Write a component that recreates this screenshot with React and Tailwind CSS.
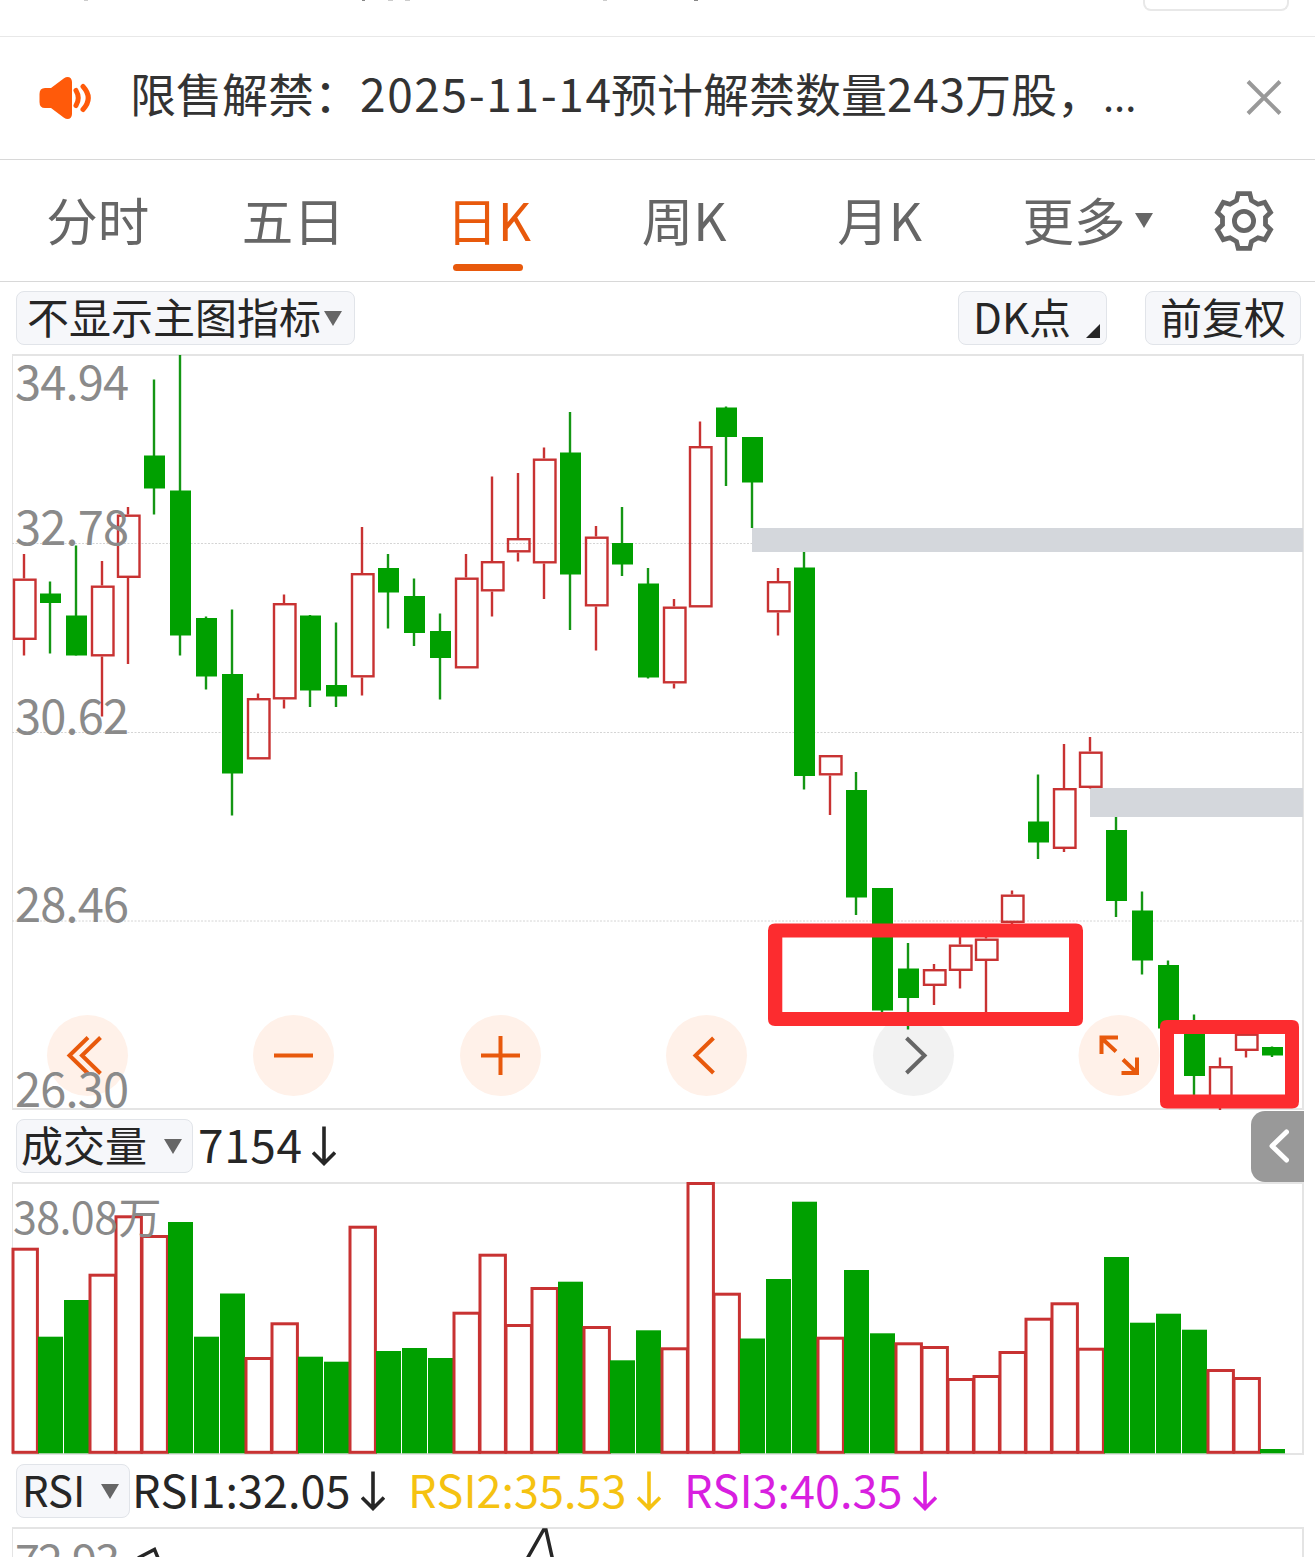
import React from "react";

const FONT = "font-['Noto_Sans_CJK_SC',sans-serif]";
const UP = "#c83232";
const DOWN = "#00a000";

// [direction, high, bodyTop, bodyBottom, low] in chart pixels
const CANDLES = [
  ["u", 554, 578.5, 640, 655.5], ["d", 581.5, 593.5, 603, 653.5], ["d", 545.5, 615.5, 655.5, 655.5],
  ["u", 561, 585.5, 656.5, 716.5], ["u", 507, 514.5, 578, 664], ["d", 379.5, 455.5, 488.5, 514.5],
  ["d", 355, 490.5, 635.5, 655.5], ["d", 616.5, 618, 676.5, 689.5], ["d", 609.5, 674, 773.5, 815.5],
  ["u", 693.5, 698, 759.5, 759.5], ["u", 594.5, 603, 699.5, 708.5], ["d", 615, 615.5, 690.5, 707],
  ["d", 622.5, 685, 696.5, 707], ["u", 527, 573, 677.5, 695.5], ["d", 554, 568, 592.5, 628.5],
  ["d", 578.5, 596, 633, 646], ["d", 613.5, 631, 658, 699.5], ["u", 554, 577.5, 668.5, 668.5],
  ["u", 476.5, 561, 591.5, 616.5], ["u", 473, 538, 552.5, 561.5], ["u", 447.5, 458.5, 563.5, 599],
  ["d", 412, 452.5, 574.5, 630], ["u", 526, 536.5, 606.5, 650.5], ["d", 507, 543, 564.5, 576],
  ["d", 568, 583.5, 677.5, 678.5], ["u", 599, 606.5, 683.5, 688.5], ["u", 421.5, 446, 607.5, 607.5],
  ["d", 406.5, 407.5, 437, 486], ["d", 437, 437, 482.5, 528], ["u", 568, 581, 612.5, 635.5],
  ["d", 552, 567.5, 776, 789.5], ["u", 755, 755, 775.5, 815], ["d", 772, 790, 897.5, 915],
  ["d", 888, 888, 1010.5, 1014], ["d", 943, 968.5, 998, 1029.5], ["u", 964, 969, 986, 1005],
  ["u", 936, 944.5, 971, 988.5], ["u", 936, 938.5, 961, 1013], ["u", 890.5, 894.5, 923, 924],
  ["d", 774.5, 821.5, 842.5, 859], ["u", 744, 788, 849, 852], ["u", 737, 751.5, 788, 788.5],
  ["d", 817, 830, 901, 917], ["d", 891.5, 910.5, 960.5, 974.5], ["d", 960.5, 965, 1028.5, 1028.5],
  ["d", 1014.5, 1030, 1076, 1098], ["u", 1057.5, 1066, 1100, 1110], ["u", 1033, 1033.5, 1051, 1057.5],
  ["d", 1046.5, 1047, 1055.5, 1057],
];

const VOLUMES = [
  1247.7, 1336.7, 1300, 1273.7, 1215.3, 1235, 1222, 1336.7, 1293.5, 1357, 1322.3, 1356.7, 1361.7, 1225.7,
  1351, 1348, 1358, 1311.7, 1253.7, 1324, 1287, 1281.7, 1326, 1360.3, 1330.3, 1347.3, 1182, 1292.7, 1338.5,
  1279, 1201.7, 1336.7, 1270, 1333.3, 1342.3, 1346, 1378, 1375, 1351, 1317.7, 1302.3, 1347.7, 1257, 1322.7,
  1313.7, 1329.7, 1369, 1377, 1449,
];
const VOLUME_UP = new Set([0, 3, 4, 5, 9, 10, 13, 17, 18, 19, 20, 22, 25, 26, 27, 31, 34, 35, 36, 37, 38, 39, 40, 41, 46, 47]);

function Run({ w, children }) {
  return (
    <span className="inline-flex justify-between whitespace-pre" style={{ width: w }}>
      {[...children].map((c, i) => <span key={i}>{c}</span>)}
    </span>
  );
}

function Triangle({ className = "" }) {
  return (
    <svg viewBox="0 0 18 15" className={"h-[15px] w-[18px] shrink-0 " + className}>
      <path d="M0 0H18L9 15Z" fill="#666" />
    </svg>
  );
}

function DownArrow({ className = "" }) {
  return (
    <svg viewBox="0 0 24 40" className={"h-10 w-6 shrink-0 " + className} fill="none" stroke="currentColor" strokeWidth="3.6">
      <path d="M12 0.5V37M1 26.5L12 37.5L23 26.5" />
    </svg>
  );
}

function Chip({ className = "", label, children }) {
  return (
    <button className={"flex items-center rounded-lg border-[1.5px] border-[#e1e4e9] bg-[#f6f7fa] text-[42px] leading-[52px] text-[#262626] " + className}>
      <span className="-mt-[5px]">{label}</span>
      {children}
    </button>
  );
}

function Gear() {
  const pts = [];
  for (let k = 0; k < 6; k++) {
    const a = (k * Math.PI) / 3;
    for (const [x, y] of [[-7.5, -20.5], [-5.8, -27.3], [5.8, -27.3], [7.5, -20.5]]) {
      pts.push([x * Math.cos(a) - y * Math.sin(a), x * Math.sin(a) + y * Math.cos(a)].map((n) => n.toFixed(2)).join(","));
    }
  }
  return (
    <svg viewBox="-32 -32 64 64" className="h-16 w-16" fill="none" stroke="#666" strokeWidth="4.8">
      <polygon points={pts.join(" ")} />
      <circle r="9.6" />
    </svg>
  );
}

function Speaker() {
  return (
    <svg viewBox="38 74 56 46" className="h-[46px] w-14">
      <path d="M45 87H51L64 77.2C68 74.5 72 76.5 72 81V113C72 117.5 68 119.5 64 116.8L51 107H45Q39.5 107 39.5 101V93Q39.5 87 45 87Z" fill="#ff5a0a" />
      <path d="M76 89.5Q80.5 97 76 104.5M83 85.5Q93.5 97 83 108.5" fill="none" stroke="#ff5a0a" strokeWidth="5" strokeLinecap="round" />
    </svg>
  );
}

function AxisLabel({ y, x = 15, w = 114, size = 47, children }) {
  return <text x={x} y={y} textLength={w} lengthAdjust="spacing" fontSize={size} fill="#8a8a8a">{children}</text>;
}

function Frame({ top, bottom }) {
  return (
    <g>
      <path d={`M12.5 ${top}V${bottom}`} stroke="#e4e4e4" />
      <path d={`M1303 ${top}V${bottom}M12 ${top + 1}H1304M12 ${bottom - 1}H1304`} stroke="#e4e4e4" strokeWidth="2" />
    </g>
  );
}

function RoundButton({ cx, muted, children }) {
  return (
    <g transform={`translate(${cx} 1055.5)`} fill="none" stroke={muted ? "#666" : "#e8590c"} strokeWidth="4">
      <circle r="40.5" stroke="none" fill={muted ? "#f2f2f2" : "#fff1e9"} />
      {children}
    </g>
  );
}

function PriceChart() {
  return (
    <svg viewBox="0 354 1315 756" className="block h-[756px] w-full shrink-0">
      <Frame top={354} bottom={1110} />
      <path d="M12 543.5H1303M12 732.5H1303M12 921H1303" stroke="#d4d4d4" strokeDasharray="2 1.5" />
      <RoundButton cx={87.5}><path d="M0.5 -18L-18 0L0.5 18M13 -18L-5.5 0L13 18" /></RoundButton>
      <RoundButton cx={293.5}><path d="M-19.5 0H19.5" /></RoundButton>
      <RoundButton cx={500.5}><path d="M-19.5 0H19.5M0 -19.5V19.5" /></RoundButton>
      <RoundButton cx={706.5}><path d="M7 -17.5L-11 0L7 17.5" /></RoundButton>
      <RoundButton cx={913.5} muted><path d="M-7 -17.5L11 0L-7 17.5" /></RoundButton>
      <RoundButton cx={1119}>
        <path d="M-1 -18H-17.5V-1.5M-17 -17L-3 -4M2.5 17.5H18V2M4 4L17.5 17" />
      </RoundButton>
      <rect x="752" y="528" width="551" height="24" fill="#d4d7dc" />
      <rect x="1090" y="788" width="213" height="29" fill="#d4d7dc" />
      {CANDLES.map(([dir, hi, top, bot, lo], i) => {
        const x = 24 + 26 * i;
        return dir === "u" ? (
          <g key={i} stroke={UP} fill="none">
            <path d={`M${x} ${hi}V${top}M${x} ${bot}V${lo}`} strokeWidth="2.4" />
            <rect x={x - 10} y={top + 1.2} width="21.5" height={bot - top - 2.4} strokeWidth="2.4" />
          </g>
        ) : (
          <g key={i}>
            <path d={`M${x} ${hi}V${lo}`} stroke="#149614" strokeWidth="2.4" />
            <rect x={x - 10} y={top} width="21" height={bot - top} fill={DOWN} />
          </g>
        );
      })}
      <AxisLabel y={400}>34.94</AxisLabel>
      <AxisLabel y={545}>32.78</AxisLabel>
      <AxisLabel y={734}>30.62</AxisLabel>
      <AxisLabel y={922}>28.46</AxisLabel>
      <AxisLabel y={1107}>26.30</AxisLabel>
      <g fill="#fc2c2f" fillRule="evenodd">
        <path d="M775 923.5H1076Q1083 923.5 1083 930.5V1019Q1083 1026 1076 1026H775Q768 1026 768 1019V930.5Q768 923.5 775 923.5ZM782.3 937.5V1012H1069V937.5Z" />
        <path d="M1167 1020H1292Q1299 1020 1299 1027V1101.500Q1299 1108.500 1292 1108.500H1167Q1160 1108.500 1160 1101.500V1027Q1160 1020 1167 1020ZM1174 1034V1094.500H1285V1034Z" />
      </g>
    </svg>
  );
}

function VolumeChart() {
  return (
    <svg viewBox="0 1182 1315 273" className="block h-[273px] w-full shrink-0">
      <Frame top={1182} bottom={1455} />
      {VOLUMES.map((top, i) => {
        const x = 12 + 26 * i;
        return VOLUME_UP.has(i) ? (
          <rect key={i} x={x + (i ? 0 : 1)} y={top + 1.5} width={i ? 25.4 : 24.4} height={1452.3 - top - 1.5} fill="none" stroke={UP} strokeWidth="3" />
        ) : (
          <rect key={i} x={x} y={top} width="25" height={1453.3 - top} fill={DOWN} />
        );
      })}
      <text x="13" y="1234" fontSize="43" fill="#8a8a8a">
        <tspan textLength="105" lengthAdjust="spacing">38.08</tspan>
        <tspan x="118.5">万</tspan>
      </text>
    </svg>
  );
}

function RsiChart() {
  return (
    <svg viewBox="0 1527 1315 30" className="block h-[30px] w-full shrink-0">
      <Frame top={1527} bottom={1600} />
      <path d="M138 1558L154.5 1549.5L158 1558M527 1559L543.5 1530H546L552.5 1559" fill="none" stroke="#262626" strokeWidth="3.5" />
      <AxisLabel y={1577} w={105} size={45}>72.93</AxisLabel>
    </svg>
  );
}

function Tab({ active, children }) {
  return (
    <div className={"relative flex h-full w-[195.5px] items-center justify-center text-[51.5px] leading-none " + (active ? "text-[#e8590c]" : "text-[#666]")}>
      <span className="-mt-1">{children}</span>
      {active && <span className="absolute bottom-[10px] left-[62px] h-[7px] w-[70px] rounded-full bg-[#e8590c]" />}
    </div>
  );
}

function Reading({ className, children }) {
  return (
    <div className={"flex items-center " + className}>
      <span className="-mt-[5px] flex"><Run w={217}>{children}</Run></span>
      <DownArrow className="ml-[12px]" />
    </div>
  );
}

export default function App() {
  return (
    <div className={"flex h-[1557px] w-[1315px] flex-col overflow-hidden bg-white " + FONT}>
      <header className="flex h-[37px] shrink-0 items-start justify-between border-b border-[#e8e8e8] pr-[26px]">
        <svg viewBox="0 0 720 4" className="h-1 w-[720px]" strokeWidth="1">
          <path d="M84 0.5H88M388 0.5H393M405 0.5H410M603 0.5H607" stroke="#ccc" />
          <path d="M362 0.5H365M694 0.5H698" stroke="#888" />
        </svg>
        <div className="h-[11px] w-[146px] rounded-b-lg border-2 border-t-0 border-[#e8e8e8]" />
      </header>

      <section className="flex h-[123px] shrink-0 items-center border-b border-[#d8d8d8] pl-[38px] text-[46px] text-[#333]">
        <Speaker />
        <div className="-mt-[9px] ml-[36px] flex grow leading-none">
          <Run w={230}>限售解禁：</Run>
          <Run w={251}>2025-11-14</Run>
          <Run w={276}>预计解禁数量</Run>
          <Run w={78}>243</Run>
          <Run w={138}>万股，</Run>
          <span className="text-[40px] leading-[50px]">...</span>
        </div>
        <svg viewBox="0 0 36 36" className="mr-[33px] h-9 w-9" stroke="#999" strokeWidth="4">
          <path d="M2 1.5L34 33.5M34 1.5L2 33.5" />
        </svg>
      </section>

      <nav className="flex h-[122px] shrink-0 items-center border-b border-[#d8d8d8]">
        <Tab>分时</Tab>
        <Tab>五日</Tab>
        <Tab active>日K</Tab>
        <Tab>周K</Tab>
        <Tab>月K</Tab>
        <div className="flex w-[234.5px] items-center pl-[45px] text-[51.5px] leading-none text-[#666]">
          <span className="-mt-1">更多</span>
          <Triangle className="ml-[9px]" />
        </div>
        <Gear />
      </nav>

      <div className="flex h-[72px] shrink-0 items-center pl-4 pr-[14px]">
        <Chip label="不显示主图指标" className="h-[54px] w-[339px] pl-[10px]">
          <Triangle className="ml-[3px]" />
        </Chip>
        <Chip label="DK点" className="relative ml-auto h-[54px] w-[149px] pl-[14px]">
          <svg viewBox="0 0 14 14" className="absolute bottom-[6px] right-[6px] h-[14px] w-[14px]"><path d="M14 0V14H0Z" fill="#262626" /></svg>
        </Chip>
        <Chip label="前复权" className="ml-[38px] h-[54px] w-[156px] justify-center" />
      </div>

      <PriceChart />

      <div className="flex h-[72px] shrink-0 items-center pl-4 pr-[11px] text-[46px] leading-none text-[#262626]">
        <Chip label="成交量" className="h-[54px] w-[177px] pl-1"><Triangle className="ml-[17px]" /></Chip>
        <div className="-mt-[6px] ml-[5px] flex"><Run w={104}>7154</Run></div>
        <DownArrow className="ml-[10px]" />
        <div className="ml-auto flex h-[71px] w-[53px] items-center justify-end rounded-l-[14px] bg-[#999] pr-[15px]">
          <svg viewBox="0 0 20 34" className="h-[34px] w-5" fill="none" stroke="#fff" strokeWidth="5" strokeLinecap="round" strokeLinejoin="round">
            <path d="M17.5 3L3 17L17.5 31" />
          </svg>
        </div>
      </div>

      <VolumeChart />

      <div className="flex h-[72px] shrink-0 items-center pl-4 text-[45px] leading-none">
        <Chip label="RSI" className="h-[54px] w-[114px] pl-[5px]"><Triangle className="ml-[16px]" /></Chip>
        <Reading className="ml-[2px] text-[#262626]">RSI1:32.05</Reading>
        <Reading className="ml-[23px] text-[#f5c211]">RSI2:35.53</Reading>
        <Reading className="ml-[23px] text-[#d81fe0]">RSI3:40.35</Reading>
      </div>

      <RsiChart />
    </div>
  );
}
